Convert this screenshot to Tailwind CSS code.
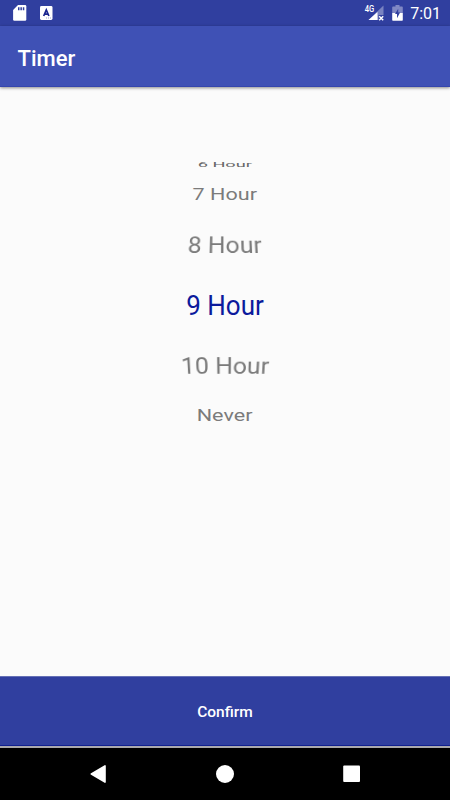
<!DOCTYPE html>
<html lang="en">
<head>
<meta charset="utf-8">
<title>Timer</title>
<script src="https://cdn.jsdelivr.net/npm/@tailwindcss/browser@4"></script>
</head>
<body class="w-[450px] h-[800px] overflow-hidden bg-[#fbfbfb] font-[Roboto,sans-serif] flex flex-col">
  <div class="h-[26px] shrink-0 bg-[#303f9f] flex items-center justify-between pl-[13px] pr-[9px] text-white">
    <div class="flex items-center gap-[13px]">
      <svg class="w-[14px] h-[16px]" viewBox="0 0 14 16"><path fill="#fff" d="M5 0h7a1.300 1.300 0 0 1 1.300 1.300v13.200a1.300 1.300 0 0 1-1.300 1.300H1.400A1.300 1.300 0 0 1 .1 14.500V5z"/><path fill="#303f9f" d="M5 2.200h1.500v3H5zM7.400 2.200h1.500v3H7.400zM9.800 2.200h1.500v3H9.800z"/></svg>
      <svg class="w-[13px] h-[14px]" viewBox="0 0 13 14"><rect width="12.500" height="14" rx="1.400" fill="#fff"/><path fill="none" stroke="#1a2590" stroke-width="1.700" d="M3.700 10 6.300 4 8.900 10M4.700 8.200h3.300"/><path fill="#9aa1d4" d="M6 11.500h1v1H6zM8 11.500h1v1H8zM10 11.500h1v1h-1z"/></svg>
    </div>
    <div class="flex items-center">
      <svg class="w-[20px] h-[18px]" viewBox="0 0 20 18"><path fill="#7983c1" d="M19.500 1.500v9.500h-5v5H4.500z"/><path fill="#fff" d="M13.500 8V16H4.500z"/><path stroke="#fff" stroke-width="1.500" d="m15.200 12.200 4 4m0-4-4 4"/><text x=".8" y="8" fill="#fff" font-size="9" font-weight="500" textLength="9.500" lengthAdjust="spacingAndGlyphs" font-family="Roboto">4G</text></svg>
      <svg class="w-[11px] h-[16px] ml-[8px]" viewBox="0 0 11 16"><path fill="#8088c4" d="M3.500 0h4v1.600H10a.8.8 0 0 1 .8.8V8H.2V2.400A.8.8 0 0 1 1 1.600h2.500z"/><path fill="#fff" d="M.2 8h10.600v7a.8.8 0 0 1-.8.8H1a.8.8 0 0 1-.8-.8z"/><path fill="#303f9f" d="M6.200 3.800 3 9h2v4.200l3.100-5.600H6.200z"/></svg>
      <span class="ml-[7px] text-[16px] leading-[20px] pt-[2px]">7:01</span>
    </div>
  </div>
  <header class="h-[61px] shrink-0 bg-[#3f51b5] border-b border-[#3546ad] shadow-[0_1px_3px_rgba(0,0,0,0.45)] flex items-center pl-[17.500px] pt-[4px] text-white text-[22px] font-medium">Timer</header>
  <main class="flex-1 pt-[61px] text-[26px] leading-[30px] text-[#7b7b7b] text-center">
    <div class="h-[31px] flex items-center justify-center"><span class="text-[#686868] [transform:translateY(0.4px)_scale(0.7,0.25)]">6 Hour</span></div>
    <div class="h-[31px] flex items-center justify-center"><span class="[transform:scale(0.83,0.6)]">7 Hour</span></div>
    <div class="h-[69px] flex items-center justify-center"><span class="[transform:perspective(270px)_translateZ(-13px)_rotateX(24deg)]">8 Hour</span></div>
    <div class="h-[53px] flex items-center justify-center text-[#0c1a9c]"><span class="[transform:translateY(-0.5px)_scaleY(1.03)]">9 Hour</span></div>
    <div class="h-[68px] flex items-center justify-center"><span class="[transform:perspective(270px)_translateZ(-13px)_rotateX(-24deg)]">10 Hour</span></div>
    <div class="h-[32px] flex items-center justify-center"><span class="[transform:scale(0.83,0.6)]">Never</span></div>
  </main>
  <button class="h-[70px] shrink-0 bg-[#303f9f] border-t border-t-[#6570b5] border-b border-b-[#10208f] text-white text-[15.500px] font-medium flex items-center justify-center pt-[3px]">Confirm</button>
  <div class="h-[2px] shrink-0 bg-[#aaa9ad]"></div>
  <nav class="h-[52px] shrink-0 bg-black flex">
    <svg class="w-[450px] h-[52px]" viewBox="0 0 450 52" fill="#fff"><path d="M91 25.200 104.600 17.200a.8.8 0 0 1 1.200.7v16.200a.8.8 0 0 1-1.200.7L91 26.800a.9.900 0 0 1 0-1.600z"/><circle cx="225" cy="26" r="9"/><rect x="343.200" y="17.500" width="16.800" height="16.500" rx="1"/></svg>
  </nav>
</body>
</html>
